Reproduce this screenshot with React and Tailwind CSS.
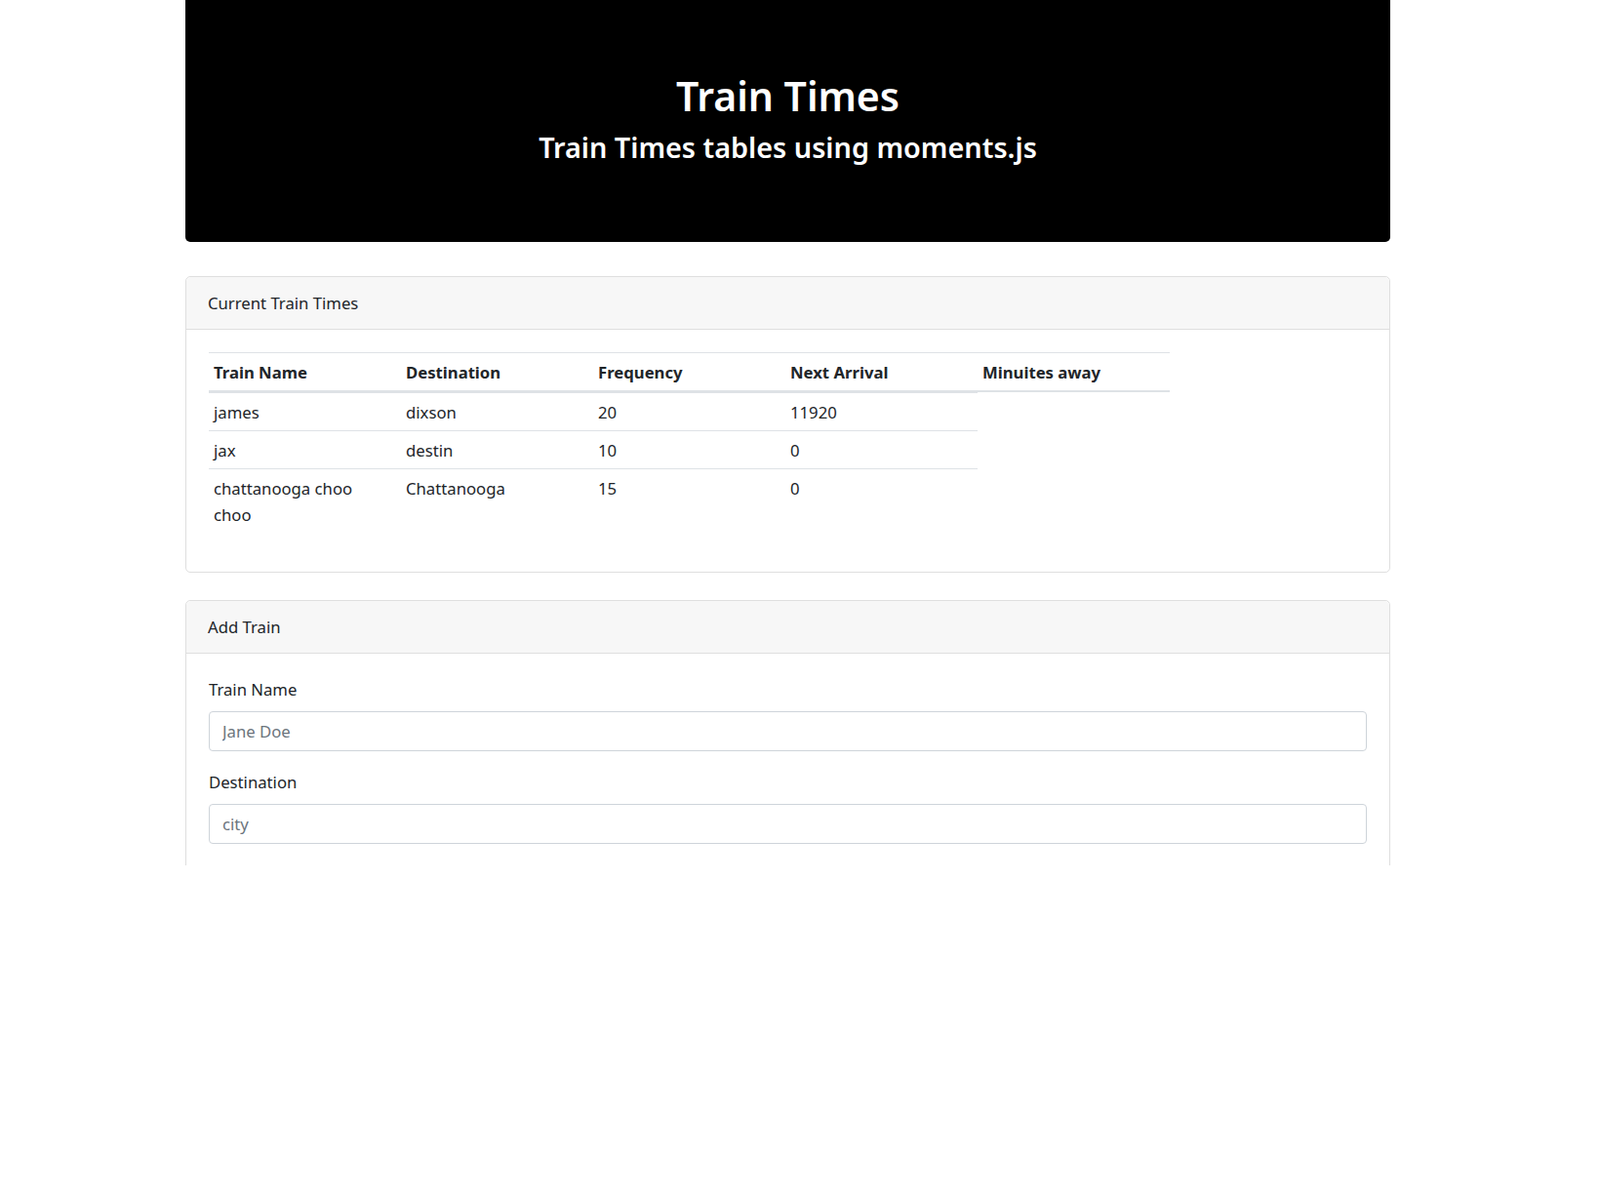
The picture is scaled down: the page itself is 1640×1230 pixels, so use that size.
export default function App() {
  const rows = [
    ["james", "dixson", "20", "11920"],
    ["jax", "destin", "10", "0"],
    ["chattanooga choo choo", "Chattanooga", "15", "0"],
  ];
  const heads = ["Train Name", "Destination", "Frequency", "Next Arrival", "Minuites away"];
  return (
    <div className="h-[887px] overflow-hidden bg-white text-[#212529] font-['Noto_Sans',sans-serif] text-[16.7px] leading-[27px]">
      <div className="ml-[190px] w-[1235px]">
        <div className="h-[248px] bg-black rounded-b-[5px] flex flex-col items-center text-white">
          <h1 className="mt-[71px] text-[41px] leading-[54px] font-semibold">Train Times</h1>
          <h3 className="mt-[7px] text-[28.8px] leading-[38px] font-semibold">Train Times tables using moments.js</h3>
        </div>

        <div className="mt-[35px] border border-[#dfdfdf] rounded-[5px]">
          <div className="h-[54px] bg-[#f7f7f7] border-b border-[#dfdfdf] px-[22px] flex items-center rounded-t-[5px]">
            Current Train Times
          </div>
          <div className="px-[23px] pt-[23px] pb-[22px]">
            <table className="table-fixed w-[984px] border-separate border-spacing-0 mb-[18px]">
              <thead>
                <tr>
                  {heads.map((h) => (
                    <th
                      key={h}
                      className="w-[197px] text-left font-bold pl-[5px] pr-[8px] pt-[6px] pb-[5px] border-t border-b-2 border-[#dee2e6] align-bottom"
                    >
                      {h}
                    </th>
                  ))}
                </tr>
              </thead>
              <tbody>
                {rows.map((r, ri) => (
                  <tr key={ri}>
                    {r.map((c, ci) => (
                      <td
                        key={ci}
                        className="pl-[5px] pr-[8px] py-[5.5px] align-top border-t border-[#dee2e6]"
                      >
                        {c}
                      </td>
                    ))}
                  </tr>
                ))}
              </tbody>
            </table>
          </div>
        </div>

        <div className="mt-[28px] border border-[#dfdfdf] rounded-[5px]">
          <div className="h-[54px] bg-[#f7f7f7] border-b border-[#dfdfdf] px-[22px] flex items-center rounded-t-[5px]">
            Add Train
          </div>
          <div className="px-[23px] pt-[23px] pb-[120px]">
            <div className="mb-[18px]">
              <label className="block mb-[9px]">Train Name</label>
              <input
                placeholder="Jane Doe"
                className="block w-full h-[41px] px-[13px] border border-[#ced4da] rounded-[4px] placeholder:text-[#6c757d] outline-none"
              />
            </div>
            <div className="mb-[18px]">
              <label className="block mb-[9px]">Destination</label>
              <input
                placeholder="city"
                className="block w-full h-[41px] px-[13px] border border-[#ced4da] rounded-[4px] placeholder:text-[#6c757d] outline-none"
              />
            </div>
          </div>
        </div>
      </div>
    </div>
  );
}
